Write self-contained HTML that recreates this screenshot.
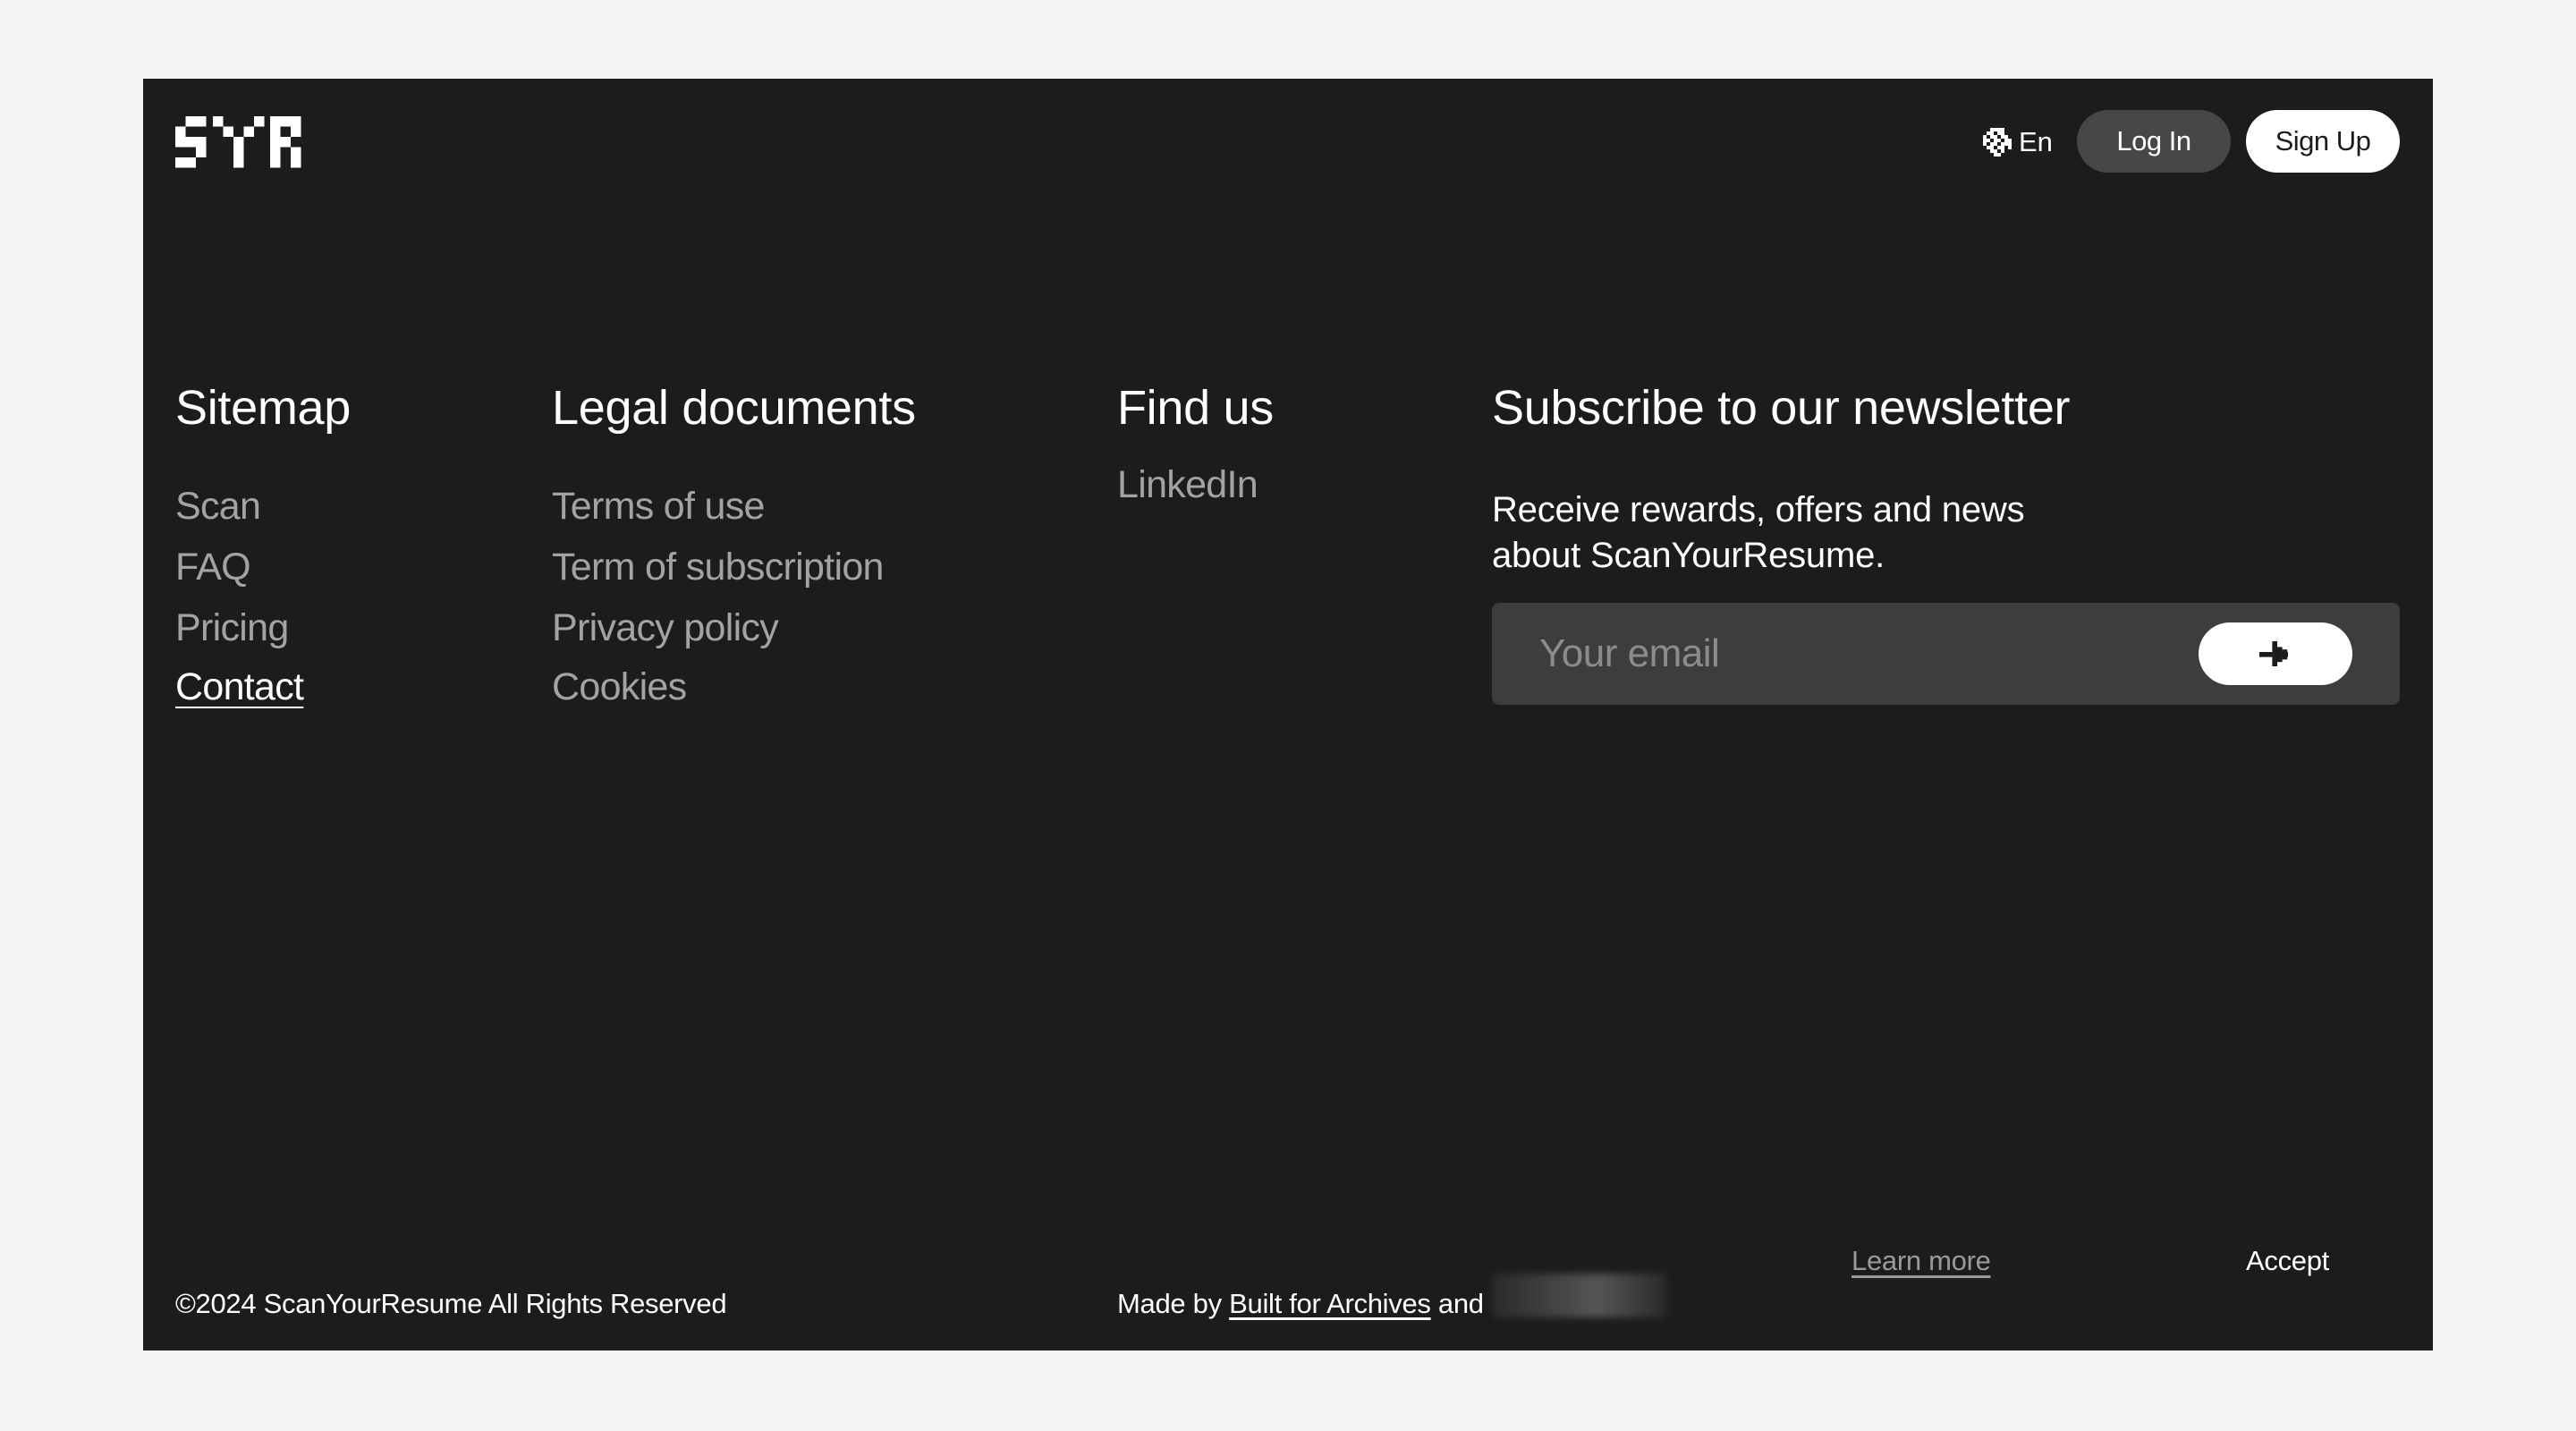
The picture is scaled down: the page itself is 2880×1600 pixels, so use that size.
<!DOCTYPE html>
<html><head><meta charset="utf-8"><style>
*{margin:0;padding:0;box-sizing:border-box}
body{width:2880px;height:1600px;background:#f4f4f4;font-family:"Liberation Sans",sans-serif;position:relative;overflow:hidden}
.panel{position:absolute;left:160px;top:88px;width:2560px;height:1422px;background:#1c1c1c}
.t{position:absolute;white-space:nowrap;line-height:1}
.h{font-size:54px;color:#fff;letter-spacing:-0.3px}
.l{font-size:43px;color:#a3a3a3;letter-spacing:-0.7px}
.btn{position:absolute;top:123px;height:70px;width:172px;border-radius:35px;display:flex;align-items:center;justify-content:center;font-size:31px;letter-spacing:-0.5px}
.f{font-size:31px;color:#fff;letter-spacing:-0.3px}
</style></head><body>
<div class="panel"></div>
<svg style="position:absolute;left:196px;top:130px" width="142" height="58" viewBox="0 0 142 58" fill="#fff">
<rect x="11.5" y="0" width="23" height="11.5"/><rect x="0" y="11.5" width="11.5" height="11.5"/><rect x="0" y="23" width="34.5" height="11.5"/><rect x="23" y="34.5" width="11.5" height="11.5"/><rect x="0" y="46" width="23" height="11.5"/>
<rect x="42" y="0" width="11.5" height="11.5"/><rect x="88" y="0" width="11.5" height="11.5"/><rect x="53.5" y="11.5" width="11.5" height="11.5"/><rect x="76.5" y="11.5" width="11.5" height="11.5"/><rect x="65" y="23" width="11.5" height="34.5"/>
<rect x="106" y="0" width="11.5" height="57.5"/><rect x="117.5" y="0" width="23" height="11.5"/><rect x="129" y="11.5" width="11.5" height="11.5"/><rect x="117.5" y="23" width="11.5" height="11.5"/><rect x="129" y="34.5" width="11.5" height="23"/>
</svg>
<svg style="position:absolute;left:2217px;top:143px" width="32" height="32" viewBox="0 0 8 8" fill="#fff">
<rect x="2" y="0" width="4" height="1"/><rect x="1" y="1" width="2" height="1"/><rect x="4" y="1" width="2" height="1"/><rect x="0" y="2" width="1" height="1"/><rect x="2" y="2" width="2" height="1"/><rect x="5" y="2" width="2" height="1"/><rect x="0" y="3" width="2" height="1"/><rect x="3" y="3" width="2" height="1"/><rect x="6" y="3" width="2" height="1"/><rect x="0" y="4" width="1" height="1"/><rect x="2" y="4" width="2" height="1"/><rect x="5" y="4" width="3" height="1"/><rect x="1" y="5" width="2" height="1"/><rect x="4" y="5" width="2" height="1"/><rect x="7" y="5" width="1" height="1"/><rect x="2" y="6" width="2" height="1"/><rect x="5" y="6" width="1" height="1"/><rect x="3" y="7" width="2" height="1"/>
</svg>
<div class="t" style="left:2257px;top:143px;font-size:31px;color:#fff">En</div>
<div class="btn" style="left:2322px;background:#474747;color:#fff">Log In</div>
<div class="btn" style="left:2511px;background:#fff;color:#1c1c1c">Sign Up</div>

<div class="t h" style="left:196px;top:429px">Sitemap</div>
<div class="t l" style="left:196px;top:545px">Scan</div>
<div class="t l" style="left:196px;top:613px">FAQ</div>
<div class="t l" style="left:196px;top:681px">Pricing</div>
<div class="t l" style="left:196px;top:747px;color:#fff;text-decoration:underline;text-underline-offset:8px;text-decoration-thickness:2px">Contact</div>

<div class="t h" style="left:617px;top:429px">Legal documents</div>
<div class="t l" style="left:617px;top:545px">Terms of use</div>
<div class="t l" style="left:617px;top:613px">Term of subscription</div>
<div class="t l" style="left:617px;top:681px">Privacy policy</div>
<div class="t l" style="left:617px;top:747px">Cookies</div>

<div class="t h" style="left:1249px;top:429px">Find us</div>
<div class="t l" style="left:1249px;top:521px">LinkedIn</div>

<div class="t h" style="left:1668px;top:429px">Subscribe to our newsletter</div>
<div class="t" style="left:1668px;top:550px;font-size:40px;color:#fff;letter-spacing:-0.2px">Receive rewards, offers and news</div>
<div class="t" style="left:1668px;top:601px;font-size:40px;color:#fff;letter-spacing:-0.2px">about ScanYourResume.</div>
<div style="position:absolute;left:1668px;top:674px;width:1015px;height:114px;background:#3d3d3d;border-radius:8px"></div>
<div class="t" style="left:1721px;top:709px;font-size:44px;color:#8c8c8c;letter-spacing:-0.5px">Your email</div>
<div style="position:absolute;left:2458px;top:696px;width:172px;height:70px;background:#fff;border-radius:35px"></div>
<svg style="position:absolute;left:2526px;top:713px" width="36" height="36" viewBox="0 0 9 9" fill="#1c1c1c">
<rect x="0" y="4" width="8" height="1.4"/><rect x="3.6" y="1" width="1.4" height="7"/><rect x="5" y="2.6" width="1.4" height="4.2"/><rect x="6.4" y="3.3" width="1.4" height="2.8"/>
</svg>

<div class="t f" style="left:196px;top:1442px">©2024 ScanYourResume All Rights Reserved</div>
<div class="t f" style="left:1249px;top:1442px">Made by <span style="text-decoration:underline;text-underline-offset:5px">Built for Archives</span> and</div>
<div style="position:absolute;left:1668px;top:1424px;width:196px;height:49px;background:linear-gradient(90deg,#2a2a2a,#555 60%,#2a2a2a);filter:blur(4px);border-radius:6px"></div>
<div class="t f" style="left:2070px;top:1394px;color:#9a9a9a;text-decoration:underline;text-underline-offset:6px">Learn more</div>
<div class="t f" style="left:2511px;top:1394px">Accept</div>
</body></html>
